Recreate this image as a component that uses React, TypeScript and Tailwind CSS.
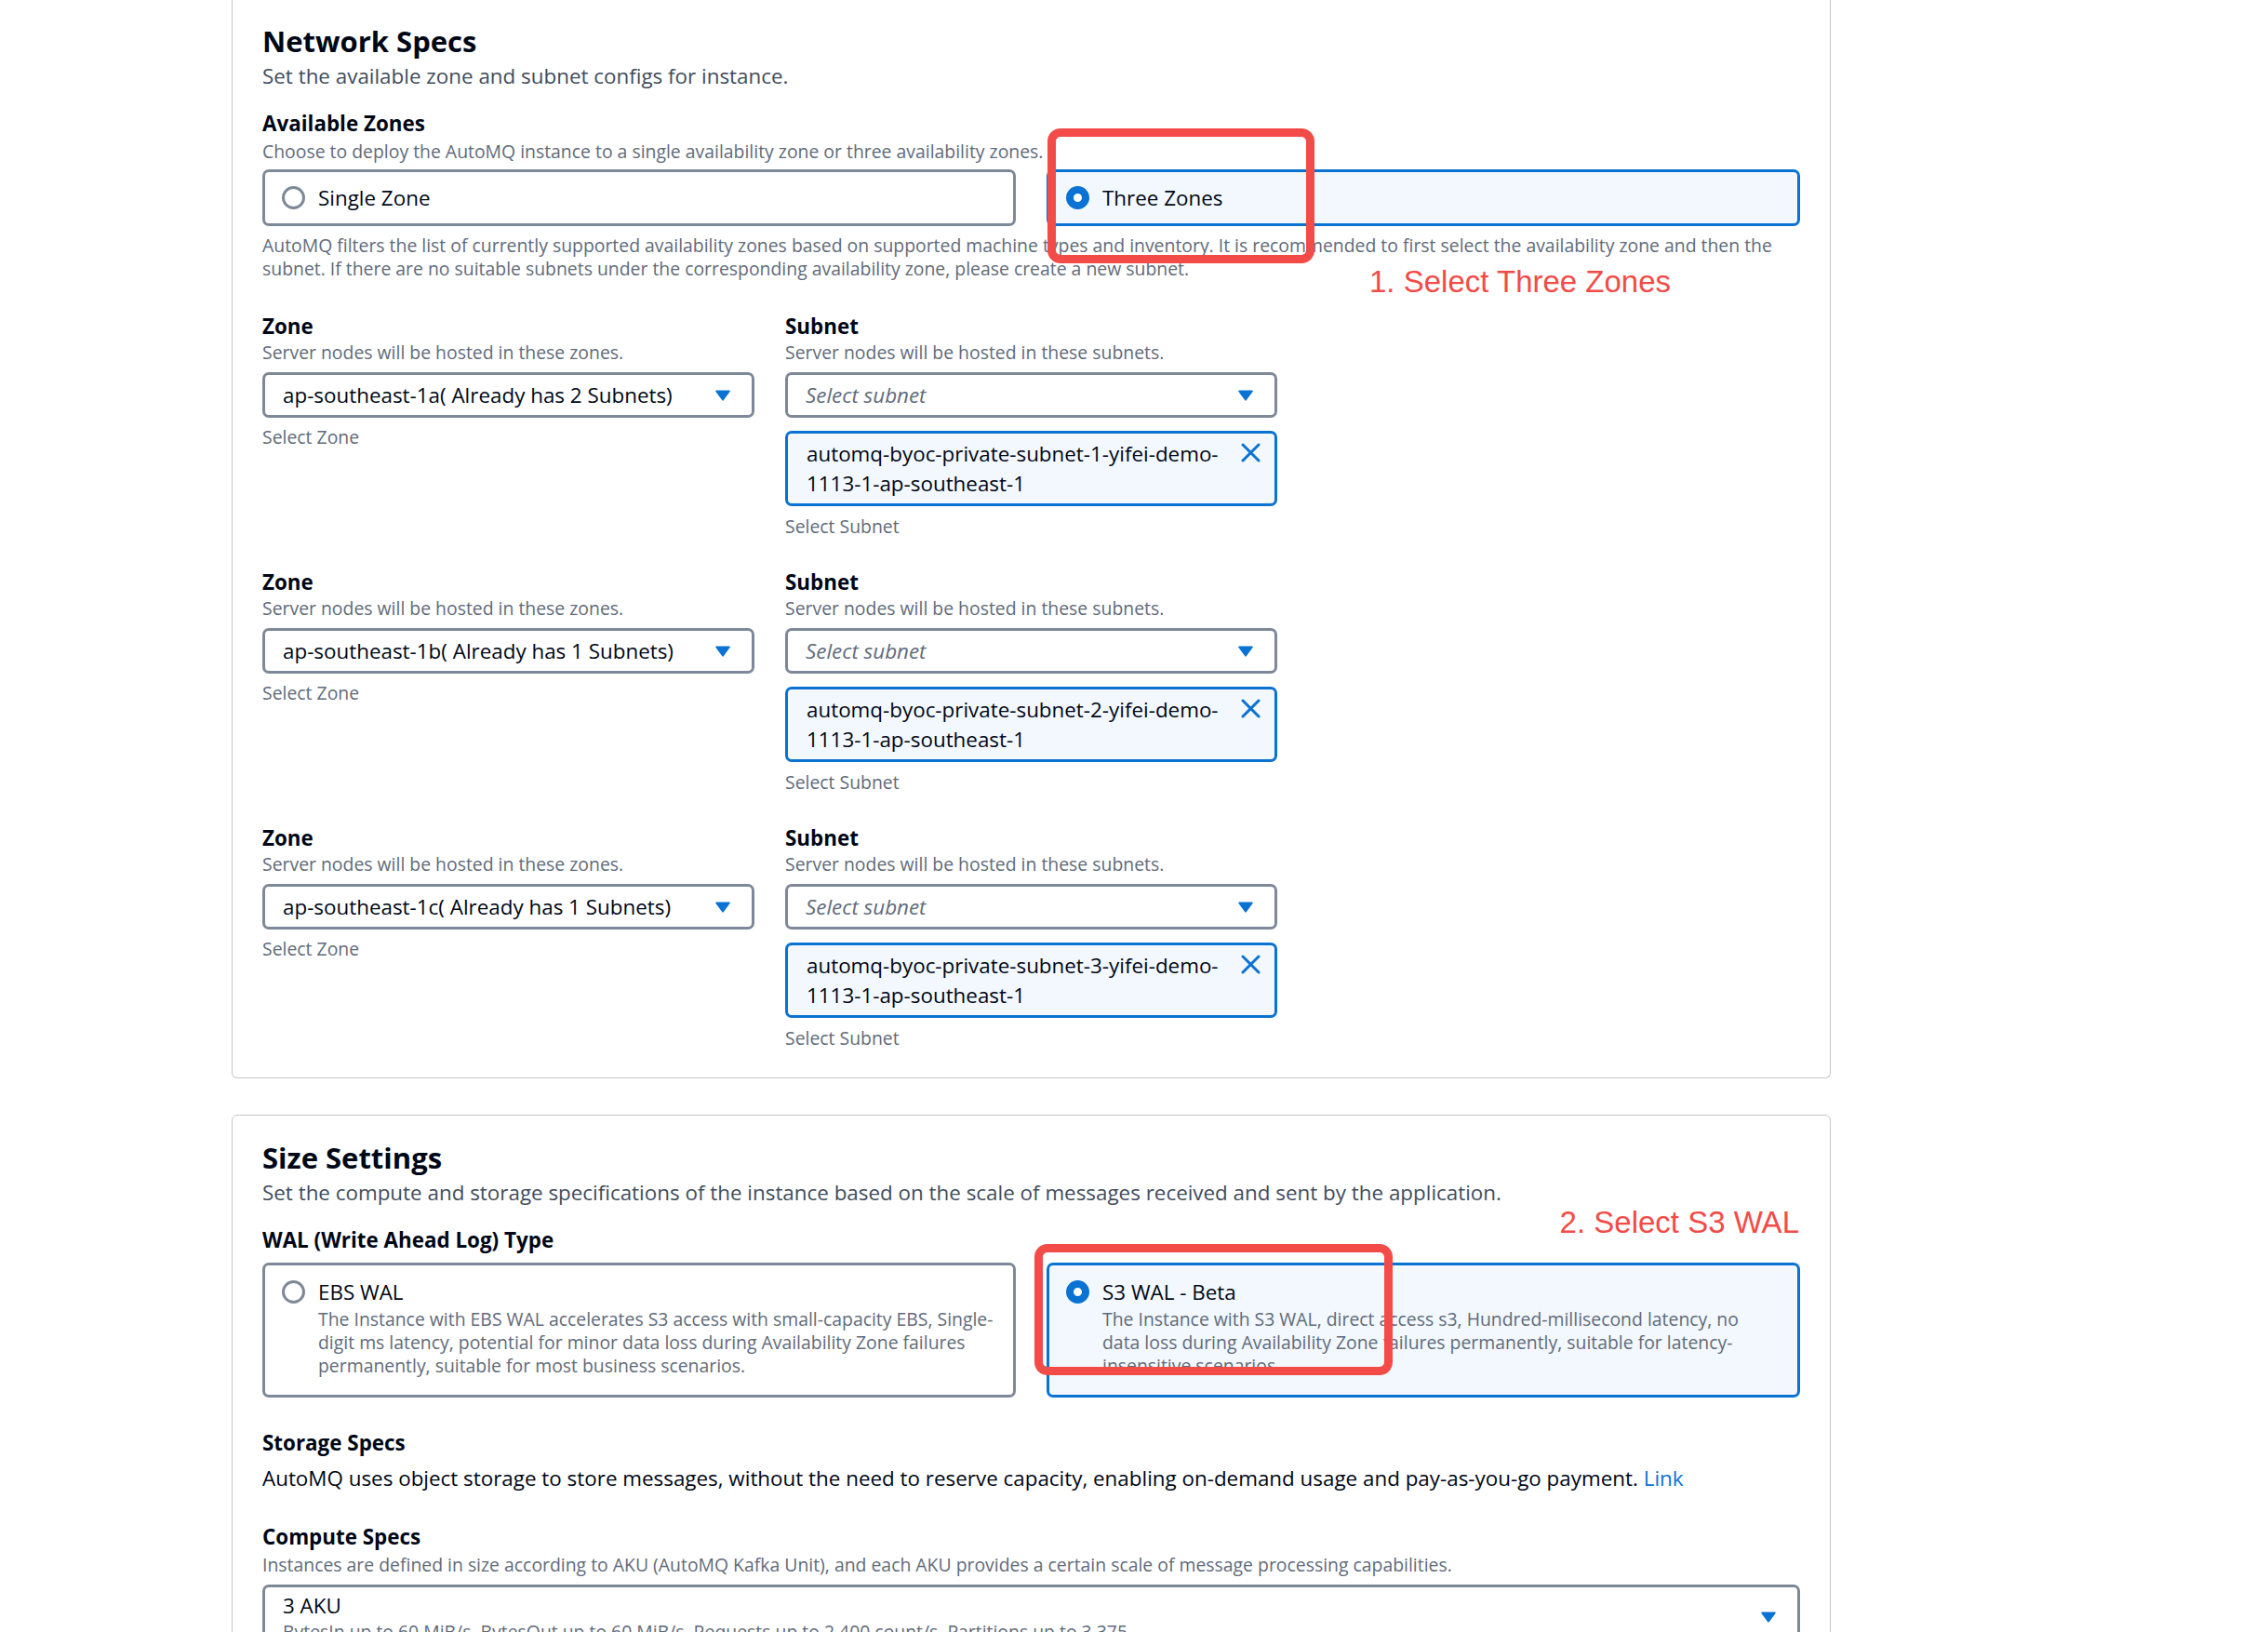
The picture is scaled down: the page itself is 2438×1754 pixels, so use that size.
import React from 'react';

const zones = [
  { zone: 'ap-southeast-1a( Already has 2 Subnets)', subnet: 'automq-byoc-private-subnet-1-yifei-demo-1113-1-ap-southeast-1' },
  { zone: 'ap-southeast-1b( Already has 1 Subnets)', subnet: 'automq-byoc-private-subnet-2-yifei-demo-1113-1-ap-southeast-1' },
  { zone: 'ap-southeast-1c( Already has 1 Subnets)', subnet: 'automq-byoc-private-subnet-3-yifei-demo-1113-1-ap-southeast-1' },
];

function Caret() {
  return (
    <svg width="16" height="12" viewBox="0 0 16 12" className="shrink-0">
      <path d="M1 0.5h14a0.8 0.8 0 0 1 0.7 1.2l-7 9.6a0.8 0.8 0 0 1-1.4 0l-7-9.6A0.8 0.8 0 0 1 1 0.5z" fill="#0972d3" />
    </svg>
  );
}

function Dismiss() {
  return (
    <svg width="21" height="21" viewBox="0 0 21 21" className="shrink-0 mt-[4px]">
      <path d="M2 2l17 17M19 2L2 19" stroke="#0972d3" strokeWidth="3" strokeLinecap="round" fill="none" />
    </svg>
  );
}

function Radio({ checked }: { checked: boolean }) {
  return checked ? (
    <span className="block w-[25px] h-[25px] rounded-full border-[8px] border-[#0972d3] bg-white shrink-0" />
  ) : (
    <span className="block w-[25px] h-[25px] rounded-full border-[3px] border-[#7d8998] bg-white shrink-0" />
  );
}

function ZoneTile({ label, checked }: { label: string; checked: boolean }) {
  return (
    <div
      className={
        checked
          ? 'flex items-center gap-[14px] pl-[18px] py-[12px] border-[3px] border-[#0972d3] bg-[#f2f8fd] rounded-[7px]'
          : 'flex items-center gap-[14px] pl-[18px] py-[12px] border-[3px] border-[#7d8998] bg-white rounded-[7px]'
      }
    >
      <Radio checked={checked} />
      <span className="text-[22.4px] leading-[31px] text-[#000716]">{label}</span>
    </div>
  );
}

function WalTile({ label, text, checked }: { label: string; text: string; checked: boolean }) {
  return (
    <div
      className={
        checked
          ? 'flex items-start gap-[14px] pl-[18px] pr-[20px] pt-[13px] pb-[19px] border-[3px] border-[#0972d3] bg-[#f2f8fd] rounded-[7px]'
          : 'flex items-start gap-[14px] pl-[18px] pr-[20px] pt-[13px] pb-[19px] border-[3px] border-[#7d8998] bg-white rounded-[7px]'
      }
    >
      <span className="mt-[3px]">
        <Radio checked={checked} />
      </span>
      <div>
        <div className="text-[22.4px] leading-[31px] text-[#000716]">{label}</div>
        <div className="mt-[1px] text-[19.4px] leading-[25px] text-[#5f6b7a]">{text}</div>
      </div>
    </div>
  );
}

function SelectBox({ value, placeholder }: { value?: string; placeholder?: string }) {
  return (
    <div className="h-[49px] flex items-center justify-between pl-[19px] pr-[23px] border-[3px] border-[#7d8998] rounded-[7px] bg-white">
      {value ? (
        <span className="text-[22.4px] leading-[31px] text-[#000716]">{value}</span>
      ) : (
        <span className="text-[22.4px] leading-[31px] italic text-[#5f6b7a]">{placeholder}</span>
      )}
      <Caret />
    </div>
  );
}

export default function App() {
  return (
    <main className="relative min-h-screen w-full overflow-hidden bg-white font-['Open_Sans',sans-serif] text-[#000716]">
      {/* Network specs */}
      <section className="ml-[249px] w-[1719px] border-x border-b border-[#c6c6cd] rounded-b-[6px] px-[32px] pt-[25px] pb-[30px]">
        <h2 className="text-[31px] leading-[38px] font-bold">Network Specs</h2>
        <p className="mt-[3px] text-[22.4px] leading-[31px] text-[#414d5c]">Set the available zone and subnet configs for instance.</p>

        <div className="mt-[20px] text-[22.4px] leading-[31px] font-bold">Available Zones</div>
        <div className="mt-[2px] text-[19.4px] leading-[25px] text-[#5f6b7a]">
          Choose to deploy the AutoMQ instance to a single availability zone or three availability zones.
        </div>
        <div className="mt-[7px] grid grid-cols-2 gap-[33px]">
          <ZoneTile label="Single Zone" checked={false} />
          <ZoneTile label="Three Zones" checked />
        </div>
        <p className="mt-[8px] text-[19.4px] leading-[25px] text-[#5f6b7a]">
          AutoMQ filters the list of currently supported availability zones based on supported machine types and inventory. It is recommended to first select the availability zone and then the subnet. If there are no suitable subnets under the corresponding availability zone, please create a new subnet.
        </p>

        <div className="mt-[34px] flex flex-col gap-[32px]">
          {zones.map((z) => (
            <div key={z.zone} className="grid grid-cols-3 gap-[33px]">
              <div>
                <div className="text-[22.4px] leading-[31px] font-bold">Zone</div>
                <div className="text-[19.4px] leading-[25px] text-[#5f6b7a]">Server nodes will be hosted in these zones.</div>
                <div className="mt-[9px]">
                  <SelectBox value={z.zone} />
                </div>
                <div className="mt-[8px] text-[19.4px] leading-[25px] text-[#5f6b7a]">Select Zone</div>
              </div>
              <div>
                <div className="text-[22.4px] leading-[31px] font-bold">Subnet</div>
                <div className="text-[19.4px] leading-[25px] text-[#5f6b7a]">Server nodes will be hosted in these subnets.</div>
                <div className="mt-[9px]">
                  <SelectBox placeholder="Select subnet" />
                </div>
                <div className="mt-[14px] flex items-start justify-between gap-[10px] pl-[20px] pr-[15px] pt-[6px] pb-[5px] border-[3px] border-[#0972d3] bg-[#f2f8fd] rounded-[7px]">
                  <span className="text-[22.4px] leading-[32px] text-[#000716]">{z.subnet}</span>
                  <Dismiss />
                </div>
                <div className="mt-[9px] text-[19.4px] leading-[25px] text-[#5f6b7a]">Select Subnet</div>
              </div>
            </div>
          ))}
        </div>
      </section>

      {/* Size settings */}
      <section className="mt-[39px] ml-[249px] w-[1719px] border border-[#c6c6cd] rounded-[6px] px-[32px] pt-[26px] pb-[40px]">
        <h2 className="text-[31px] leading-[38px] font-bold">Size Settings</h2>
        <p className="mt-[3px] text-[22.4px] leading-[31px] text-[#414d5c]">
          Set the compute and storage specifications of the instance based on the scale of messages received and sent by the application.
        </p>

        <div className="mt-[20px] text-[22.4px] leading-[31px] font-bold">WAL (Write Ahead Log) Type</div>
        <div className="mt-[9px] grid grid-cols-2 gap-[33px]">
          <WalTile
            label="EBS WAL"
            checked={false}
            text="The Instance with EBS WAL accelerates S3 access with small-capacity EBS, Single-digit ms latency, potential for minor data loss during Availability Zone failures permanently, suitable for most business scenarios."
          />
          <WalTile
            label="S3 WAL - Beta"
            checked
            text="The Instance with S3 WAL, direct access s3, Hundred-millisecond latency, no data loss during Availability Zone failures permanently, suitable for latency-insensitive scenarios"
          />
        </div>

        <div className="mt-[33px] text-[22.4px] leading-[31px] font-bold">Storage Specs</div>
        <p className="mt-[7px] text-[22.4px] leading-[31px]">
          AutoMQ uses object storage to store messages, without the need to reserve capacity, enabling on-demand usage and pay-as-you-go payment.{' '}
          <a className="text-[#0972d3]">Link</a>
        </p>

        <div className="mt-[32px] text-[22.4px] leading-[31px] font-bold">Compute Specs</div>
        <div className="mt-[2px] text-[19.4px] leading-[25px] text-[#5f6b7a]">
          Instances are defined in size according to AKU (AutoMQ Kafka Unit), and each AKU provides a certain scale of message processing capabilities.
        </div>
        <div className="mt-[9px] flex items-center justify-between pl-[19px] pr-[23px] pt-[4px] pb-[10px] border-[3px] border-[#7d8998] rounded-[7px]">
          <div>
            <div className="text-[22.4px] leading-[31px]">3 AKU</div>
            <div className="text-[19.4px] leading-[25px] text-[#5f6b7a]">
              BytesIn up to 60 MiB/s, BytesOut up to 60 MiB/s, Requests up to 2,400 count/s, Partitions up to 3,375
            </div>
          </div>
          <Caret />
        </div>
      </section>

      {/* annotations */}
      <div className="absolute left-[1126px] top-[138px] w-[287px] h-[145px] border-[9px] border-[#f34b47] rounded-[14px]" />
      <div className="absolute left-[1472px] top-[284px] font-['Liberation_Sans',Arial,sans-serif] text-[33px] leading-[38px] text-[#f34b47]">
        1. Select Three Zones
      </div>
      <div className="absolute left-[1112px] top-[1337px] w-[385px] h-[141px] border-[9px] border-[#f34b47] rounded-[14px]" />
      <div className="absolute right-[504px] top-[1295px] font-['Liberation_Sans',Arial,sans-serif] text-[33px] leading-[38px] text-[#f34b47]">
        2. Select S3 WAL
      </div>
    </main>
  );
}
